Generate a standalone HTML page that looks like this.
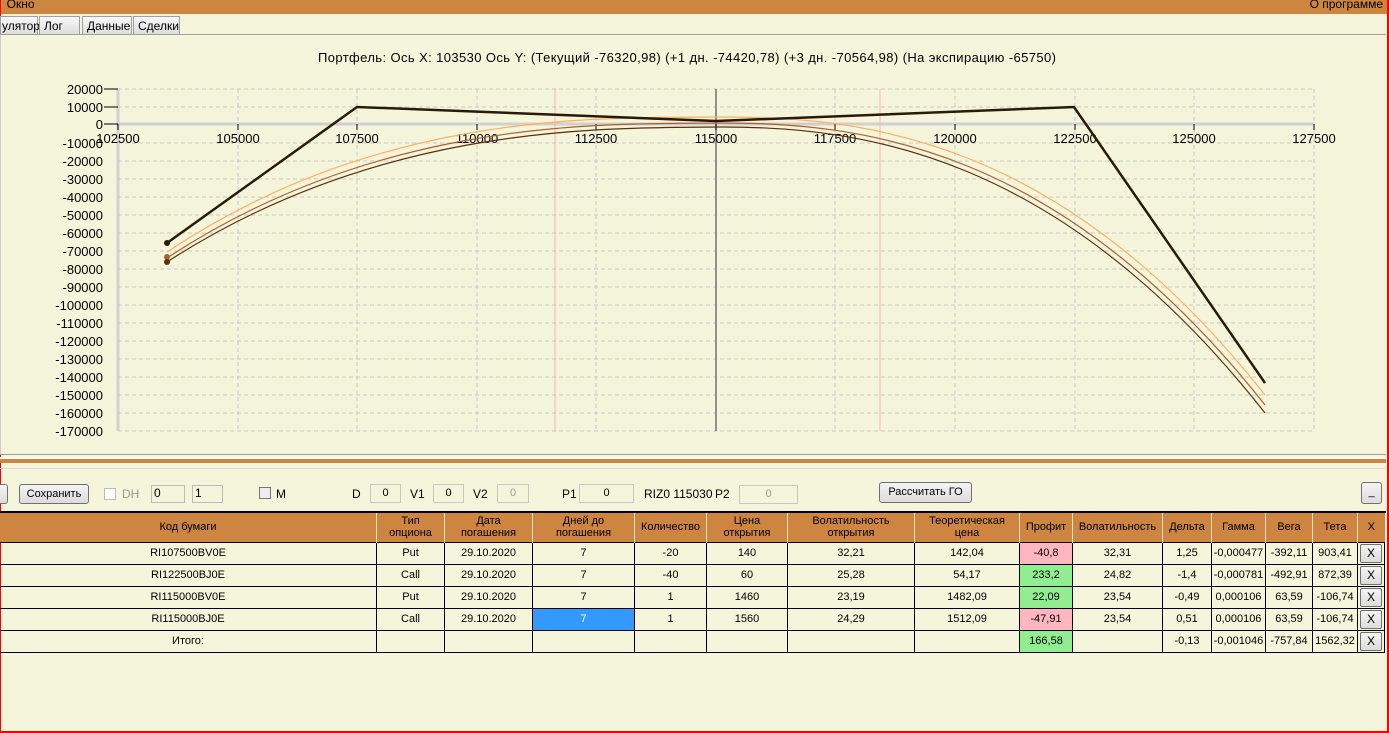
<!DOCTYPE html>
<html><head><meta charset="utf-8"><style>
*{margin:0;padding:0;box-sizing:border-box}
body{width:1389px;height:733px;overflow:hidden;background:#f5f5dc;font-family:"Liberation Sans",sans-serif;position:relative}
.abs{position:absolute}
.title{left:0;top:0;width:1389px;height:14px;background:#cd853f;font-size:12px;line-height:8px;color:#000}
.tab{top:16px;height:19px;border:1px solid #a0a0a0;border-bottom:none;background:linear-gradient(#f8f8f8,#dcdcdc);font-size:12px;line-height:18px;padding-left:4px}
.btn{border:1px solid #707070;border-radius:3px;background:linear-gradient(#f4f4f4,#dcdcdc);font-size:11px;text-align:center}
.inp{border:1px solid #c8c8c8;background:#f5f5dc;font-size:11px;text-align:center;height:19px;line-height:17px}
.lbl{font-size:12px}
table{border-collapse:collapse;position:absolute;left:-1px;top:513px;font-size:11px;table-layout:fixed}
td{border:1px solid #000;text-align:center;height:22px;padding:0}
th{background:#cd853f;font-weight:normal;height:29px;border-left:1px solid #f0e0c0;line-height:12px;font-size:11px}
.xb{display:inline-block;width:22px;height:19px;border:1px solid #707070;border-radius:2px;background:linear-gradient(#f4f4f4,#dcdcdc);line-height:17px;font-size:12px}
</style></head><body>
<div class="abs title">&nbsp;&nbsp;Окно<span style="position:absolute;right:6px">О программе</span></div>
<div class="abs" style="left:0;top:0;width:1px;height:733px;background:red"></div>
<div class="abs" style="right:0;top:0;width:2px;height:733px;background:red"></div>
<div class="abs" style="left:0;top:731px;width:1389px;height:2px;background:red"></div>
<div class="abs tab" style="left:0;width:38px;padding-left:1px">улятор</div>
<div class="abs tab" style="left:39px;width:41px">Лог</div>
<div class="abs tab" style="left:82px;width:50px">Данные</div>
<div class="abs tab" style="left:133px;width:47px">Сделки</div>
<div class="abs" style="left:0;top:34px;width:1386px;height:1px;background:#a0a0a0"></div>
<svg class="abs" style="left:0;top:35px" width="1389" height="420" viewBox="0 35 1389 420">
<text x="318" y="62" font-size="13" textLength="738" lengthAdjust="spacing" font-family="Liberation Sans">Портфель: Ось X:  103530 Ось Y:  (Текущий -76320,98)  (+1 дн. -74420,78)  (+3 дн. -70564,98)  (На экспирацию -65750)</text>
<g stroke="#c8c8c8" stroke-dasharray="4,3" stroke-width="1">
<line x1="118" y1="89" x2="1314" y2="89"/><line x1="118" y1="107" x2="1314" y2="107"/>
<line x1="118" y1="143" x2="1314" y2="143"/><line x1="118" y1="161" x2="1314" y2="161"/><line x1="118" y1="179" x2="1314" y2="179"/><line x1="118" y1="197" x2="1314" y2="197"/><line x1="118" y1="215" x2="1314" y2="215"/><line x1="118" y1="233" x2="1314" y2="233"/><line x1="118" y1="251" x2="1314" y2="251"/><line x1="118" y1="269" x2="1314" y2="269"/><line x1="118" y1="287" x2="1314" y2="287"/><line x1="118" y1="305" x2="1314" y2="305"/><line x1="118" y1="323" x2="1314" y2="323"/><line x1="118" y1="341" x2="1314" y2="341"/><line x1="118" y1="359" x2="1314" y2="359"/><line x1="118" y1="377" x2="1314" y2="377"/><line x1="118" y1="395" x2="1314" y2="395"/><line x1="118" y1="413" x2="1314" y2="413"/><line x1="118" y1="431" x2="1314" y2="431"/>
<line x1="238" y1="89" x2="238" y2="431"/><line x1="357" y1="89" x2="357" y2="431"/><line x1="477" y1="89" x2="477" y2="431"/><line x1="596" y1="89" x2="596" y2="431"/><line x1="835" y1="89" x2="835" y2="431"/><line x1="955" y1="89" x2="955" y2="431"/><line x1="1075" y1="89" x2="1075" y2="431"/><line x1="1194" y1="89" x2="1194" y2="431"/><line x1="1314" y1="89" x2="1314" y2="431"/>
</g>
<line x1="118" y1="124" x2="1314" y2="124" stroke="#d0d0d0" stroke-width="3"/>
<line x1="118" y1="89" x2="118" y2="431" stroke="#d0d0d0" stroke-width="3"/>
<line x1="555" y1="89" x2="555" y2="431" stroke="#ffb0b0"/>
<line x1="880" y1="89" x2="880" y2="431" stroke="#ffb0b0"/>
<line x1="716" y1="89" x2="716" y2="431" stroke="#707070" stroke-width="1.5"/>
<g stroke="#000"><line x1="104" y1="89" x2="118" y2="89"/><line x1="104" y1="107" x2="118" y2="107"/><line x1="104" y1="124" x2="118" y2="124"/>
<line x1="118" y1="124" x2="118" y2="130"/><line x1="238" y1="124" x2="238" y2="130"/><line x1="357" y1="124" x2="357" y2="130"/><line x1="477" y1="124" x2="477" y2="130"/><line x1="596" y1="124" x2="596" y2="130"/><line x1="716" y1="124" x2="716" y2="130"/><line x1="835" y1="124" x2="835" y2="130"/><line x1="955" y1="124" x2="955" y2="130"/><line x1="1075" y1="124" x2="1075" y2="130"/><line x1="1194" y1="124" x2="1194" y2="130"/><line x1="1314" y1="124" x2="1314" y2="130"/></g>
<g font-size="13" font-family="Liberation Sans" text-anchor="end">
<text x="103" y="94">20000</text><text x="103" y="112">10000</text><text x="103" y="129">0</text><text x="103" y="148">-10000</text><text x="103" y="166">-20000</text><text x="103" y="184">-30000</text><text x="103" y="202">-40000</text><text x="103" y="220">-50000</text><text x="103" y="238">-60000</text><text x="103" y="256">-70000</text><text x="103" y="274">-80000</text><text x="103" y="292">-90000</text><text x="103" y="310">-100000</text><text x="103" y="328">-110000</text><text x="103" y="346">-120000</text><text x="103" y="364">-130000</text><text x="103" y="382">-140000</text><text x="103" y="400">-150000</text><text x="103" y="418">-160000</text><text x="103" y="436">-170000</text>
</g>
<g font-size="13" font-family="Liberation Sans" text-anchor="middle">
<text x="118" y="143">102500</text><text x="238" y="143">105000</text><text x="357" y="143">107500</text><text x="477" y="143">110000</text><text x="596" y="143">112500</text><text x="716" y="143">115000</text><text x="835" y="143">117500</text><text x="955" y="143">120000</text><text x="1075" y="143">122500</text><text x="1194" y="143">125000</text><text x="1314" y="143">127500</text>
</g>
<g fill="none">
<path d="M167,252 C380,110 600,118 716,117 C860,116 1060,135 1265,395" stroke="#ffb060" stroke-width="1.2"/>
<path d="M167,258 C380,118 600,124 716,123 C860,122 1060,145 1265,405" stroke="#b0602a" stroke-width="1.2"/>
<path d="M167,262 C380,124 600,128 716,127 C860,126 1060,152 1265,413" stroke="#5a3010" stroke-width="1.2"/>
<polyline points="167,243 357,107 716,121 1074,107 1265,383" stroke="#2a1a0a" stroke-width="2.5"/>
</g>
<circle cx="167" cy="243" r="3" fill="#2a1a0a"/><circle cx="167" cy="257" r="3" fill="#b0602a"/><circle cx="167" cy="262" r="3" fill="#5a3010"/>
</svg>
<div class="abs" style="left:0;top:35px;width:1px;height:420px;background:#ccc"></div>
<div class="abs" style="left:0;top:454px;width:1386px;height:1px;background:#a0a0a0"></div>
<div class="abs" style="left:0;top:457px;width:1386px;height:2px;background:#fff"></div>
<div class="abs" style="left:0;top:459px;width:1386px;height:4px;background:#cd853f"></div>
<div class="abs" style="left:0;top:468px;width:1386px;height:1px;background:#d8d8d8"></div>
<div class="abs btn" style="left:-6px;top:484px;width:14px;height:20px"></div>
<div class="abs btn" style="left:19px;top:484px;width:70px;height:20px;line-height:18px">Сохранить</div>
<div class="abs" style="left:104px;top:488px;width:12px;height:12px;border:1px solid #bbb;background:#fff"></div>
<div class="abs lbl" style="left:122px;top:487px;color:#999">DH</div>
<div class="abs" style="left:151px;top:485px;width:34px;height:18px;border:1px solid #bbb;font-size:12px;padding-left:2px">0</div>
<div class="abs" style="left:192px;top:485px;width:31px;height:18px;border:1px solid #bbb;font-size:12px;padding-left:2px">1</div>
<div class="abs" style="left:259px;top:487px;width:12px;height:12px;border:1px solid #777;background:#eee"></div>
<div class="abs lbl" style="left:276px;top:487px">M</div>
<div class="abs lbl" style="left:352px;top:487px">D</div>
<div class="abs inp" style="left:370px;top:484px;width:31px">0</div>
<div class="abs lbl" style="left:410px;top:487px">V1</div>
<div class="abs inp" style="left:433px;top:484px;width:31px">0</div>
<div class="abs lbl" style="left:473px;top:487px">V2</div>
<div class="abs inp" style="left:497px;top:484px;width:32px;color:#999">0</div>
<div class="abs lbl" style="left:562px;top:487px">P1</div>
<div class="abs inp" style="left:579px;top:484px;width:55px">0</div>
<div class="abs lbl" style="left:644px;top:487px">RIZ0 115030</div>
<div class="abs lbl" style="left:715px;top:487px">P2</div>
<div class="abs inp" style="left:739px;top:485px;width:59px;color:#999">0</div>
<div class="abs btn" style="left:879px;top:482px;width:93px;height:21px;line-height:19px">Рассчитать ГО</div>
<div class="abs btn" style="left:1361px;top:482px;width:21px;height:22px;line-height:18px">_</div>
<div class="abs" style="left:0;top:511px;width:1386px;height:2px;background:#000"></div>
<table>
<colgroup><col style="width:377px"><col style="width:68px"><col style="width:88px"><col style="width:102px"><col style="width:72px"><col style="width:81px"><col style="width:127px"><col style="width:105px"><col style="width:53px"><col style="width:90px"><col style="width:49px"><col style="width:54px"><col style="width:47px"><col style="width:45px"><col style="width:27px"></colgroup>
<tr><th>Код бумаги</th><th>Тип<br>опциона</th><th>Дата<br>погашения</th><th>Дней до<br>погашения</th><th>Количество</th><th>Цена<br>открытия</th><th>Волатильность<br>открытия</th><th>Теоретическая<br>цена</th><th>Профит</th><th>Волатильность</th><th>Дельта</th><th>Гамма</th><th>Вега</th><th>Тета</th><th>X</th></tr>
<tr><td>RI107500BV0E</td><td>Put</td><td>29.10.2020</td><td>7</td><td>-20</td><td>140</td><td>32,21</td><td>142,04</td><td style="background:#ffb6c1">-40,8</td><td>32,31</td><td>1,25</td><td>-0,000477</td><td>-392,11</td><td>903,41</td><td><span class="xb">X</span></td></tr>
<tr><td>RI122500BJ0E</td><td>Call</td><td>29.10.2020</td><td>7</td><td>-40</td><td>60</td><td>25,28</td><td>54,17</td><td style="background:#90ee90">233,2</td><td>24,82</td><td>-1,4</td><td>-0,000781</td><td>-492,91</td><td>872,39</td><td><span class="xb">X</span></td></tr>
<tr><td>RI115000BV0E</td><td>Put</td><td>29.10.2020</td><td>7</td><td>1</td><td>1460</td><td>23,19</td><td>1482,09</td><td style="background:#90ee90">22,09</td><td>23,54</td><td>-0,49</td><td>0,000106</td><td>63,59</td><td>-106,74</td><td><span class="xb">X</span></td></tr>
<tr><td>RI115000BJ0E</td><td>Call</td><td>29.10.2020</td><td style="background:#3399ff;color:#fff">7</td><td>1</td><td>1560</td><td>24,29</td><td>1512,09</td><td style="background:#ffb6c1">-47,91</td><td>23,54</td><td>0,51</td><td>0,000106</td><td>63,59</td><td>-106,74</td><td><span class="xb">X</span></td></tr>
<tr><td>Итого:</td><td></td><td></td><td></td><td></td><td></td><td></td><td></td><td style="background:#90ee90">166,58</td><td></td><td>-0,13</td><td>-0,001046</td><td>-757,84</td><td>1562,32</td><td><span class="xb">X</span></td></tr>
</table>
</body></html>
